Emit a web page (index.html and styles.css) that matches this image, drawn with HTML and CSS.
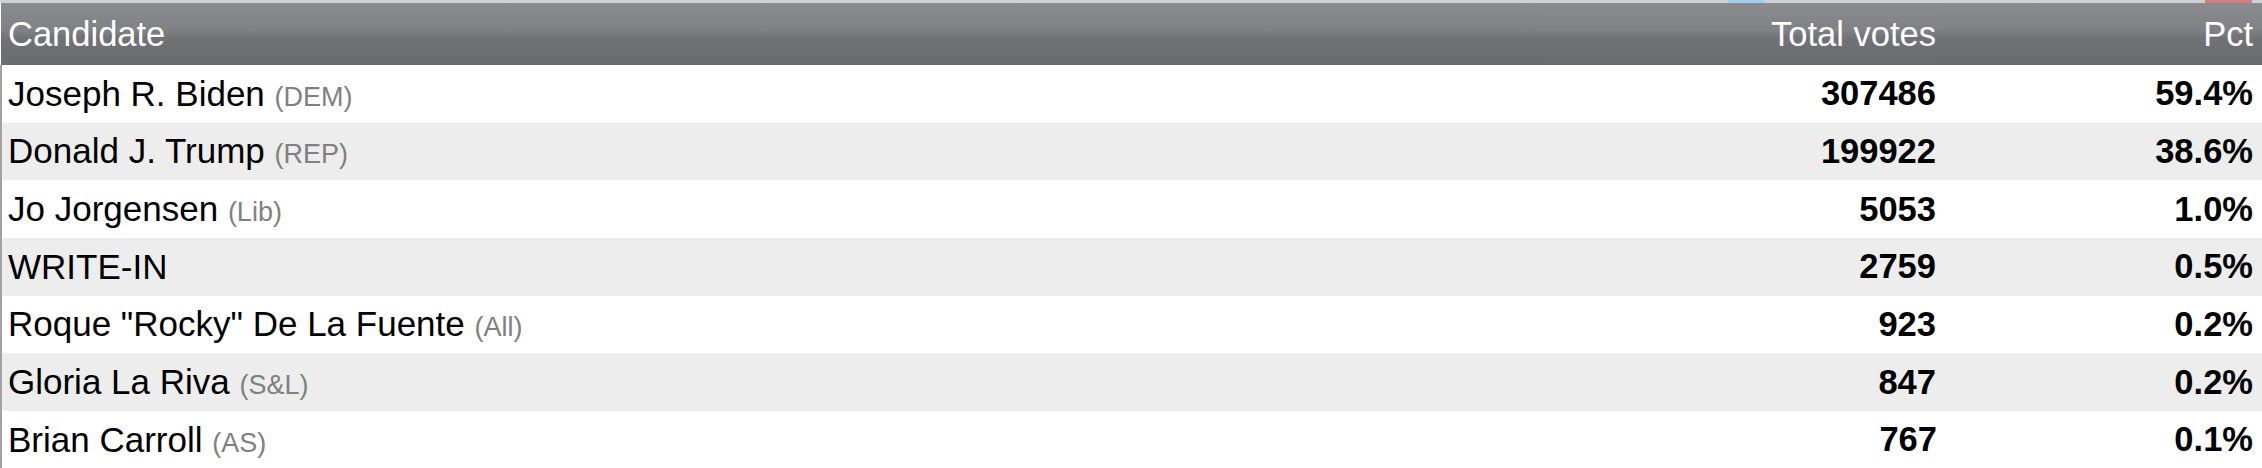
FILE: index.html
```html
<!DOCTYPE html>
<html>
<head>
<meta charset="utf-8">
<link rel="stylesheet" href="styles.css">
</head>
<body>
<div class="strip">
  <span class="bar bar-blue"></span>
  <span class="bar bar-red"></span>
</div>
<table class="results">
  <colgroup>
    <col class="c-name">
    <col class="c-votes">
    <col class="c-pct">
  </colgroup>
  <thead>
    <tr>
      <th class="name">Candidate</th>
      <th class="num votes">Total votes</th>
      <th class="num pct">Pct</th>
    </tr>
  </thead>
  <tbody>
    <tr><td class="name">Joseph R. Biden <span class="party">(DEM)</span></td><td class="num votes">307486</td><td class="num pct">59.4%</td></tr>
    <tr><td class="name">Donald J. Trump <span class="party">(REP)</span></td><td class="num votes">199922</td><td class="num pct">38.6%</td></tr>
    <tr><td class="name">Jo Jorgensen <span class="party">(Lib)</span></td><td class="num votes">5053</td><td class="num pct">1.0%</td></tr>
    <tr><td class="name">WRITE-IN</td><td class="num votes">2759</td><td class="num pct">0.5%</td></tr>
    <tr><td class="name">Roque "Rocky" De La Fuente <span class="party">(All)</span></td><td class="num votes">923</td><td class="num pct">0.2%</td></tr>
    <tr><td class="name">Gloria La Riva <span class="party">(S&amp;L)</span></td><td class="num votes">847</td><td class="num pct">0.2%</td></tr>
    <tr><td class="name">Brian Carroll <span class="party">(AS)</span></td><td class="num votes">767</td><td class="num pct">0.1%</td></tr>
  </tbody>
</table>
</body>
</html>
```
FILE: styles.css
```css
html, body {
  margin: 0;
  padding: 0;
  background: #ffffff;
  overflow: hidden;
}
body {
  font-family: "Liberation Sans", Arial, Helvetica, sans-serif;
  color: #000;
}
.strip {
  display: flex;
  height: 3px;
  background: #cfd0d2;
}
.bar {
  display: block;
  height: 3px;
}
.bar-blue {
  margin-left: 1728px;
  width: 37px;
  background: #9fd0f0;
}
.bar-red {
  margin-left: 440px;
  width: 47px;
  background: #d97a7e;
}
.results {
  width: 2262px;
  border-collapse: collapse;
  table-layout: fixed;
}
.c-votes { width: 400px; }
.c-pct { width: 325px; }
.results th {
  height: 62px;
  padding: 0;
  font-weight: normal;
  font-size: 34.5px;
  color: #fff;
  background: linear-gradient(#8a8b8f 0%, #808185 44%, #717276 56%, #6a6b6f 100%);
  text-align: left;
  vertical-align: middle;
}
.results td {
  height: 57.67px;
  padding: 0;
  font-size: 35px;
  vertical-align: middle;
  white-space: nowrap;
}
.results tbody tr:nth-child(even) td {
  background: #ededed;
}
.results td.name {
  border-left: 2px solid #a3a3a3;
  padding-left: 6px;
}
.results th.name {
  padding-left: 7px;
}
.results .num {
  text-align: right;
}
.results td.num {
  font-weight: bold;
  font-size: 34.5px;
}
.results .votes {
  padding-right: 0;
}
.results .pct {
  padding-right: 9px;
}
.party {
  font-size: 27px;
  color: #808080;
}
```
